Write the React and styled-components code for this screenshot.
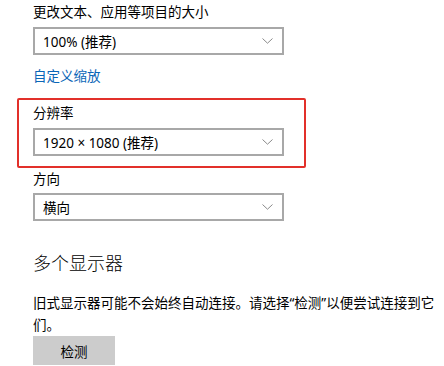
import React from 'react';
import styled, { createGlobalStyle } from 'styled-components';

const GlobalStyle = createGlobalStyle`
  body {
    margin: 0;
    background: #fff;
    font-family: "Noto Sans", "Noto Sans CJK SC", sans-serif;
    color: #000;
  }
`;

const Page = styled.div`
  padding: 0 8px 0 33px;
  width: 444px;
  height: 366px;
  box-sizing: border-box;
  overflow: hidden;
`;

const Label = styled.div`
  font-size: 13.5px;
  line-height: 20px;
  margin-top: ${props => props.top || 0}px;
`;

const SelectBox = styled.div`
  box-sizing: border-box;
  width: 251px;
  height: 28px;
  margin-top: ${props => props.top || 0}px;
  border: 2px solid #a8a8a8;
  display: flex;
  align-items: center;
  justify-content: space-between;
  padding: 0 8px 0 8px;
  font-size: 13.5px;
  background: #fff;
`;

const Chevron = styled.svg`
  width: 11px;
  height: 6px;
  margin-right: 1px;
`;

const LinkText = styled.div`
  font-size: 13.5px;
  line-height: 20px;
  color: #0a66b7;
  margin-top: 11px;
`;

const Highlight = styled.div`
  margin: 12px 0 0 -16px;
  width: 289px;
  box-sizing: border-box;
  border: 2px solid #e2302a;
  border-radius: 2px;
  padding: 3px 0 10px 14px;
`;

const Heading = styled.div`
  font-size: 18px;
  font-weight: 300;
  line-height: 28px;
  margin-top: 28px;
`;

const Paragraph = styled.p`
  font-size: 13.5px;
  line-height: 22px;
  margin: 15px 0 0;
`;

const Button = styled.div`
  width: 82px;
  height: 29px;
  background: #cccccc;
  display: flex;
  align-items: center;
  justify-content: center;
  font-size: 13.5px;
`;

const Select = ({ value, top }) => (
  <SelectBox top={top}>
    <span>{value}</span>
    <Chevron viewBox="0 0 11 6">
      <polyline points="0.5,0.5 5.5,5.2 10.5,0.5" fill="none" stroke="#8a8a8a" strokeWidth="1" />
    </Chevron>
  </SelectBox>
);

export default function App() {
  return (
    <Page>
      <GlobalStyle />
      <Label top={2}>更改文本、应用等项目的大小</Label>
      <Select value="100% (推荐)" top={5} />
      <LinkText>自定义缩放</LinkText>
      <Highlight>
        <Label>分辨率</Label>
        <Select value="1920 × 1080 (推荐)" top={5} />
      </Highlight>
      <Label top={1}>方向</Label>
      <Select value="横向" top={4} />
      <Heading>多个显示器</Heading>
      <Paragraph>旧式显示器可能不会始终自动连接。请选择“检测”以便尝试连接到它们。</Paragraph>
      <Button>检测</Button>
    </Page>
  );
}
